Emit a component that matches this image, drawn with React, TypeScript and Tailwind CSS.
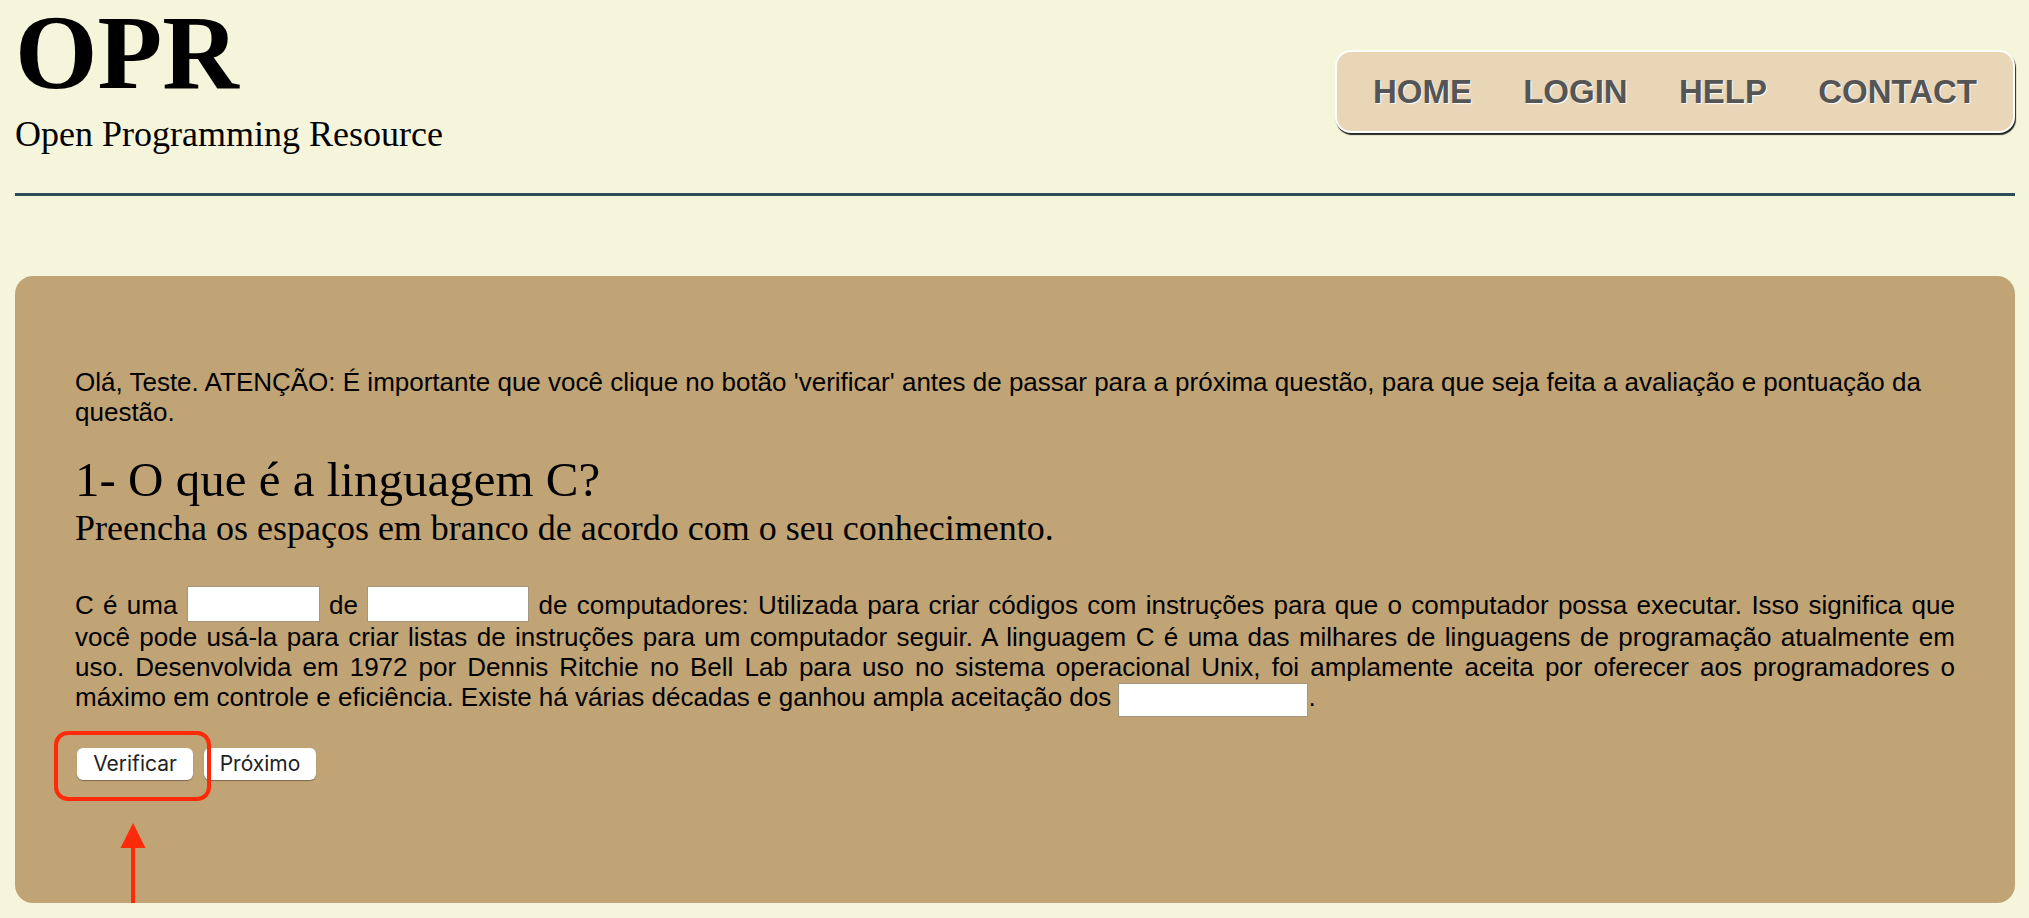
import React from "react";

const serif = "font-['Liberation_Serif','Times_New_Roman',serif]";
const sans = "font-['Liberation_Sans',Arial,sans-serif]";

const NAV_ITEMS = ["HOME", "LOGIN", "HELP", "CONTACT"];

const App: React.FC = () => {
  return (
    <div className={`min-h-screen bg-[#f5f5dc] pl-[15px] pr-[14px] pb-[15px] text-black ${sans}`}>
      {/* Header: logo on the left, nav pill on the right */}
      <header className="flex items-start justify-between">
        <div>
          <h1 className={`${serif} text-[106px] font-bold leading-none`}>OPR</h1>
          <p className={`${serif} mt-[8px] text-[36px] leading-[41px]`}>Open Programming Resource</p>
        </div>

        <nav className="mt-[50px] flex h-[83px] w-[680px] items-center justify-between rounded-[16px] border-2 border-white bg-[#e9d6b6] px-[36px] shadow-[1px_2px_1px_rgba(0,0,0,0.85)]">
          {NAV_ITEMS.map((item) => (
            <a
              key={item}
              href="#"
              className="text-[33px] font-bold leading-[38px] text-[#555555] [text-shadow:1px_1px_1px_#ffffff]"
            >
              {item}
            </a>
          ))}
        </nav>
      </header>

      <div className="mt-[38px] h-[3px] bg-[#2e4d5c]" />

      {/* Question panel */}
      <main className="mt-[80px] rounded-[18px] bg-[#c1a476] px-[60px] pt-[91px] pb-[123px]">
        <p className="text-[26px] leading-[30px]">
          Olá, Teste. ATENÇÃO: É importante que você clique no botão 'verificar' antes de passar para a próxima
          questão, para que seja feita a avaliação e pontuação da questão.
        </p>

        <h2 className={`${serif} mt-[25px] text-[49px] font-normal leading-[56px]`}>1- O que é a linguagem C?</h2>
        <h3 className={`${serif} text-[36px] font-normal leading-[41px]`}>
          Preencha os espaços em branco de acordo com o seu conhecimento.
        </h3>

        <p className="mt-[37px] text-justify text-[26px] leading-[30px]">
          C é uma{" "}
          <input
            type="text"
            className="h-[36px] w-[133px] border border-[#a3977f] bg-white align-[1px] outline-none"
          />{" "}
          de{" "}
          <input
            type="text"
            className="h-[36px] w-[162px] border border-[#a3977f] bg-white align-[1px] outline-none"
          />{" "}
          de computadores: Utilizada para criar códigos com instruções para que o computador possa executar. Isso
          significa que você pode usá-la para criar listas de instruções para um computador seguir. A linguagem C é
          uma das milhares de linguagens de programação atualmente em uso. Desenvolvida em 1972 por Dennis Ritchie
          no Bell Lab para uso no sistema operacional Unix, foi amplamente aceita por oferecer aos programadores o
          máximo em controle e eficiência. Existe há várias décadas e ganhou ampla aceitação dos{" "}
          <input
            type="text"
            className="h-[34px] w-[190px] border border-[#a3977f] bg-white align-[-2px] outline-none"
          />
          .
        </p>

        {/* Buttons with the red annotation overlaid */}
        <div className="relative mt-[31px] ml-[2px] flex gap-[11px]">
          <button className="h-[32px] w-[116px] rounded-[6px] bg-white font-['Inter',sans-serif] text-[21px] text-[#222222] shadow-[0_1px_1px_rgba(0,0,0,0.35)]">
            Verificar
          </button>
          <button className="h-[32px] w-[112px] rounded-[6px] bg-white font-['Inter',sans-serif] text-[21px] text-[#222222] shadow-[0_1px_1px_rgba(0,0,0,0.35)]">
            Próximo
          </button>

          <div className="pointer-events-none absolute left-[-23px] top-[-17px] h-[70px] w-[157px] rounded-[14px] border-4 border-[#ff2a0a]" />

          <svg
            className="pointer-events-none absolute left-[43px] top-[75px]"
            width="26"
            height="80"
            viewBox="0 0 26 80"
          >
            <polygon points="13,0 25.5,25 0.5,25" fill="#ff2a0a" />
            <rect x="11" y="24" width="4" height="56" fill="#ff2a0a" />
          </svg>
        </div>
      </main>
    </div>
  );
};

export default App;
